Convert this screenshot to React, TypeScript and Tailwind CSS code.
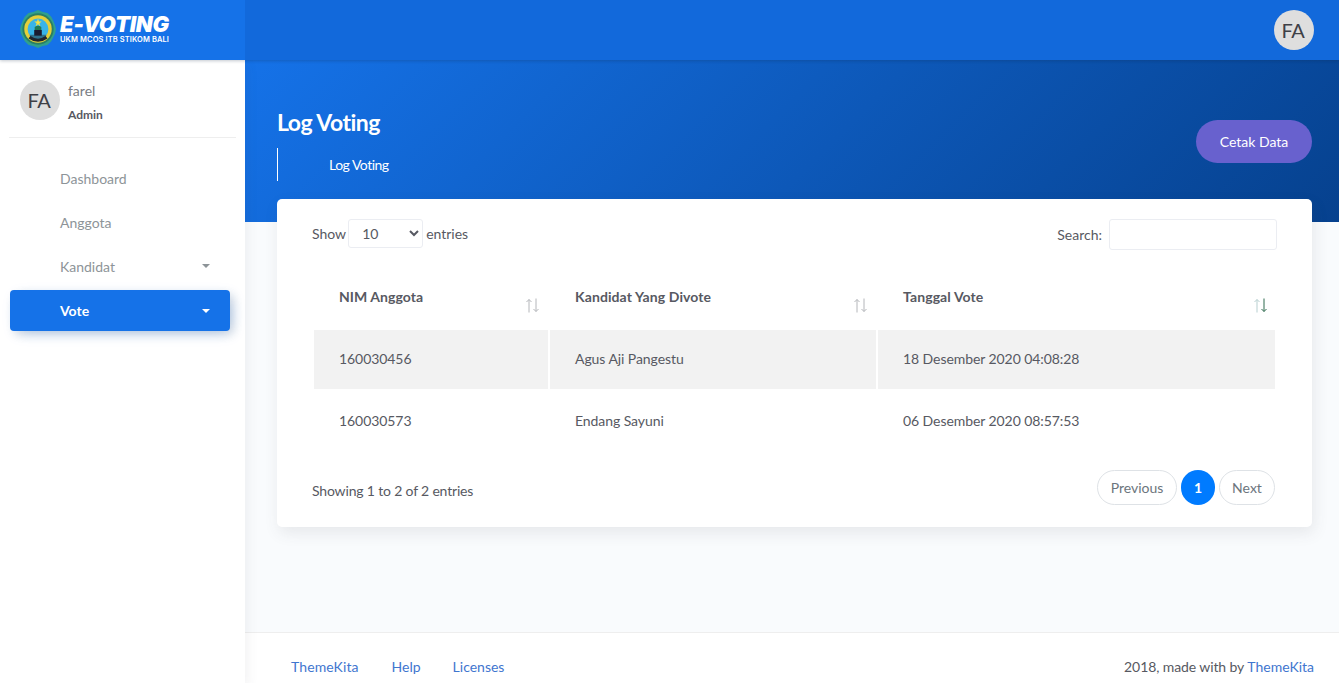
import React from "react";

function Logo() {
  return (
    <svg width="36" height="38" viewBox="0 0 38 40" className="shrink-0">
      <polygon points="19,0 24,2 29,3 33,7 35,11 37,16 38,20 37,25 35,29 33,33 29,37 24,38 19,40 14,38 9,37 5,33 3,29 1,25 0,20 1,16 3,11 5,7 9,3 14,2" fill="#2fa08e" />
      <circle cx="19" cy="20" r="16.5" fill="#2b7f62" />
      <circle cx="19" cy="20" r="14.5" fill="#e4cf3a" />
      <circle cx="19" cy="20" r="11" fill="#38b4e8" />
      <path d="M10 26 L28 26 L26 31 L12 31 Z" fill="#2f6f8a" />
      <rect x="15" y="21" width="8" height="6" fill="#1a1a2e" />
      <path d="M15.5 21 L15.5 18 Q19 15 22.5 18 L22.5 21 Z" fill="#1f7a55" />
      <polygon points="19,9 20,12 23,12 20.5,14 21.5,17 19,15 16.5,17 17.5,14 15,12 18,12" fill="#f5e042" />
      <path d="M9 30 Q19 37 29 30 L27 27.5 Q19 33 11 27.5 Z" fill="#20242c" />
    </svg>
  );
}

function SortIcon({ upColor = "#b4b6ba", downColor = "#b4b6ba" }: { upColor?: string; downColor?: string }) {
  return (
    <svg width="15" height="15" viewBox="0 0 15 15" fill="none" strokeWidth="1">
      <path d="M4 14.5V1.5M1.5 4L4 1.5L6.5 4" stroke={upColor} />
      <path d="M11 .5V13.5M8.5 11L11 13.5L13.5 11" stroke={downColor} />
    </svg>
  );
}

function Caret({ color }: { color: string }) {
  return <span className="h-0 w-0 border-x-[4px] border-t-[4px] border-x-transparent" style={{ borderTopColor: color }} />;
}

function Avatar() {
  return (
    <div className="flex h-10 w-10 shrink-0 items-center justify-center rounded-full bg-[#dedede] pr-[2px] text-[20px] tracking-[-0.3px] text-[#3e4046]">
      FA
    </div>
  );
}

function NavItem({ label, caret }: { label: string; caret?: boolean }) {
  return (
    <div className="flex h-[44px] items-center justify-between pl-[60px] pr-[35px] text-[14px] text-[#8d9498]">
      <span>{label}</span>
      {caret && <Caret color="#8d9498" />}
    </div>
  );
}

const rows = [
  ["160030456", "Agus Aji Pangestu", "18 Desember 2020 04:08:28"],
  ["160030573", "Endang Sayuni", "06 Desember 2020 08:57:53"],
];

export default function App() {
  return (
    <div
      className="flex h-screen flex-col overflow-hidden bg-[#f9fbfd] text-[14px] text-[#575962]"
      style={{ fontFamily: "Lato, 'Liberation Sans', sans-serif" }}
    >
      <header className="z-20 flex h-[60px] shrink-0 shadow-[0_1px_3px_rgba(18,38,63,0.25)]">
        <div className="flex w-[245px] shrink-0 items-center gap-[4px] bg-[#1572e8] pb-[3px] pl-[20px]">
          <Logo />
          <div className="flex flex-col text-white" style={{ fontFamily: "Inter, sans-serif" }}>
            <span className="text-[22px] font-black italic leading-[22px] tracking-[-0.3px]">E-VOTING</span>
            <span className="text-[7.5px] font-semibold leading-[9px] tracking-[0.1px]">UKM MCOS ITB STIKOM BALI</span>
          </div>
        </div>
        <div className="flex flex-1 items-center justify-end bg-[#1269db] pr-[25px]">
          <Avatar />
        </div>
      </header>

      <div className="flex min-h-0 flex-1">
        <aside className="z-10 w-[245px] shrink-0 bg-white shadow-[4px_4px_10px_rgba(69,65,78,0.06)]">
          <div className="mx-[9px] flex h-[78px] gap-[8px] border-b border-[#eeeeee] pl-[11px] pt-[20px]">
            <Avatar />
            <div className="flex flex-col">
              <span className="mt-[1px] text-[14px] leading-[20px] text-[#7a7d84]">farel</span>
              <span className="mt-[6px] text-[12px] font-bold leading-[16px] text-[#575962]">Admin</span>
            </div>
          </div>
          <nav className="pt-[18px]">
            <NavItem label="Dashboard" />
            <NavItem label="Anggota" />
            <NavItem label="Kandidat" caret />
            <div className="ml-[10px] mr-[15px] mt-[2px] flex h-[41px] items-center justify-between rounded-[4px] bg-[#1572e8] pl-[50px] pr-[20px] text-[14px] font-bold text-white shadow-[4px_4px_10px_0_rgba(0,0,0,0.1),4px_4px_15px_-5px_rgba(21,114,232,0.4)]">
              <span>Vote</span>
              <Caret color="#ffffff" />
            </div>
          </nav>
        </aside>

        <main className="flex min-w-0 flex-1 flex-col">
          <div className="h-[162px] shrink-0 bg-[linear-gradient(-45deg,#06418e,#1572e8)] pl-[32px] pr-[27px]">
            <div className="flex items-start justify-between">
              <div className="pt-[46px]">
                <h1 className="text-[23px] font-bold leading-[32px] tracking-[-0.5px] text-white">Log Voting</h1>
                <div className="mt-[10px] flex h-[33px] items-center border-l border-white pl-[51px] text-[14px] tracking-[-0.5px] text-white">
                  Log Voting
                </div>
              </div>
              <button className="mt-[60px] h-[43px] w-[116px] rounded-full bg-[#6861ce] text-[14px] text-white">
                Cetak Data
              </button>
            </div>
          </div>

          <div className="z-10 ml-[32px] mr-[27px] mt-[-23px] h-[328px] shrink-0 rounded-[5px] bg-white px-[35px] pt-[20px] shadow-[2px_6px_15px_0_rgba(69,65,78,0.1)]">
            <div className="flex items-start justify-between">
              <div className="flex h-[29px] items-center">
                <span>Show</span>
                <select className="ml-[2px] mr-[3px] h-[29px] w-[75px] rounded-[3px] border border-[#ebedf2] bg-white pl-[9px] text-[14px] text-[#575962]">
                  <option>10</option>
                </select>
                <span>entries</span>
              </div>
              <div className="flex items-center gap-[7px]">
                <span>Search:</span>
                <input className="h-[31px] w-[168px] rounded-[3px] border border-[#ebedf2] bg-white" />
              </div>
            </div>

            <table className="mt-[18px] ml-[2px] w-[961px] table-fixed border-collapse">
              <thead>
                <tr className="h-[62px] align-top">
                  <th className="w-[235px] pl-[25px] pr-[8px] pt-[18px] text-left font-bold tracking-[0.05px] text-[#575962]">
                    <div className="flex justify-between">
                      <span>NIM Anggota</span>
                      <span className="mt-[12px]"><SortIcon /></span>
                    </div>
                  </th>
                  <th className="w-[328px] border-x-2 border-white pl-[25px] pr-[8px] pt-[18px] text-left font-bold tracking-[0.1px] text-[#575962]">
                    <div className="flex justify-between">
                      <span>Kandidat Yang Divote</span>
                      <span className="mt-[12px]"><SortIcon /></span>
                    </div>
                  </th>
                  <th className="pl-[25px] pr-[7px] pt-[18px] text-left font-bold tracking-[0.1px] text-[#575962]">
                    <div className="flex justify-between">
                      <span>Tanggal Vote</span>
                      <span className="mt-[12px]"><SortIcon upColor="#b7cfd0" downColor="#2f6b4f" /></span>
                    </div>
                  </th>
                </tr>
              </thead>
              <tbody>
                {rows.map((r, i) => (
                  <tr key={r[0]} className={i === 0 ? "h-[59px] bg-[#f2f2f2]" : "h-[65px]"}>
                    {r.map((c, j) => (
                      <td key={c} className={`pb-[2px] pl-[25px] tracking-[-0.07px] ${j === 1 ? "border-x-2 border-white" : ""}`}>
                        {c}
                      </td>
                    ))}
                  </tr>
                ))}
              </tbody>
            </table>

            <div className="mt-[16px] flex items-center justify-between">
              <span className="mt-[6px] tracking-[-0.17px]">Showing 1 to 2 of 2 entries</span>
              <div className="mr-[2px] flex h-[35px] items-center gap-[4px] text-[#6c757d]">
                <span className="flex h-[35px] w-[80px] items-center justify-center rounded-full border border-[#dee2e6]">Previous</span>
                <span className="flex h-[35px] w-[34px] items-center justify-center rounded-full bg-[#007bff] font-bold text-white">1</span>
                <span className="flex h-[35px] w-[56px] items-center justify-center rounded-full border border-[#dee2e6]">Next</span>
              </div>
            </div>
          </div>

          <footer className="mt-auto flex h-[51px] shrink-0 items-start justify-between border-t border-[#eeeeee] bg-white pl-[46px] pr-[25px] pt-[23px] leading-[21px]">
            <div className="flex gap-[32px] text-[#3f76cf]">
              <span className="mr-[1px] tracking-[0.1px]">ThemeKita</span>
              <span>Help</span>
              <span>Licenses</span>
            </div>
            <div>
              <span className="tracking-[-0.1px]">2018, made with by </span>
              <span className="text-[#3f76cf]">ThemeKita</span>
            </div>
          </footer>
        </main>
      </div>
    </div>
  );
}
